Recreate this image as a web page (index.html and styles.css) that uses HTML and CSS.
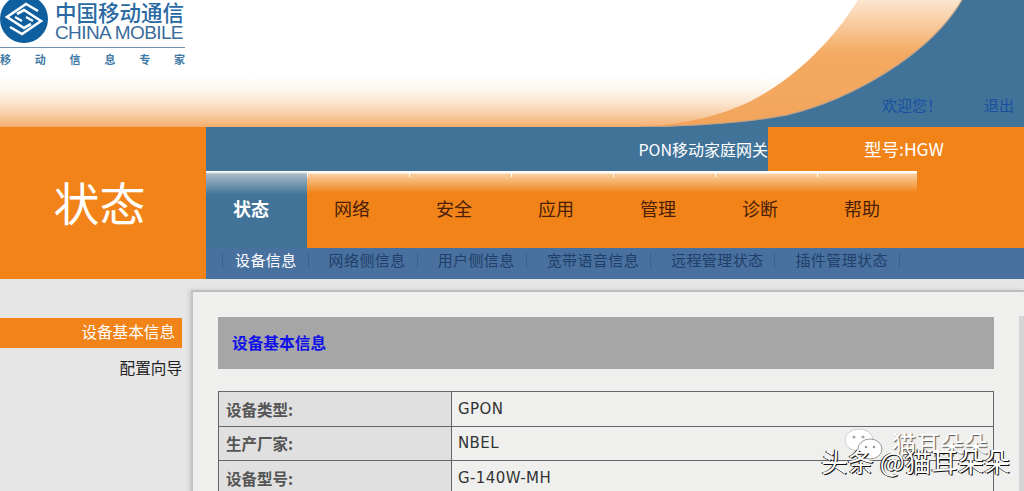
FILE: index.html
```html
<!DOCTYPE html>
<html lang="zh">
<head>
<meta charset="utf-8">
<title>状态</title>
<link rel="stylesheet" href="styles.css">
</head>
<body>
<div class="page">
  <header class="top">
    <svg class="swoosh" viewBox="0 0 1024 127" width="1024" height="127" preserveAspectRatio="none">
      <defs>
        <linearGradient id="fade" x1="0" y1="0" x2="0" y2="1">
          <stop offset="0" stop-color="#fce6cf"/>
          <stop offset="0.42" stop-color="#f4aa62"/>
          <stop offset="1" stop-color="#f2a45c"/>
        </linearGradient>
        <linearGradient id="base" x1="0" y1="0" x2="0" y2="1">
          <stop offset="0" stop-color="#ffffff" stop-opacity="0"/>
          <stop offset="0.55" stop-color="#ffffff" stop-opacity="0"/>
          <stop offset="1" stop-color="#f5ad6c"/>
        </linearGradient>
      </defs>
      <rect x="0" y="0" width="1024" height="127" fill="url(#base)"/>
      <path d="M962 0C930 55 850 100 787 115C750 122 700 126 640 127H1024V0Z" fill="#417399"/>
      <path d="M858 0C830 45 790 82 747 103C720 115 690 124 640 127C700 126 750 122 787 115C850 100 930 55 962 0Z" fill="url(#fade)"/>
      <path d="M962 0C930 55 850 100 787 115C750 122 700 126 640 127" fill="none" stroke="#b9a08a" stroke-width="1.2"/>
    </svg>
    <div class="logo">
      <svg class="logo-mark" viewBox="0 0 50 44" width="50" height="44">
        <circle cx="24" cy="19" r="24" fill="#0f5f9e"/>
        <path d="M38 11L26 4L7 17L24 28L31 24M10 27L22 34L41 21L24 10L17 14" fill="none" stroke="#fff" stroke-width="2.6"/>
        <path d="M15 17L22 21M26 17L33 21" fill="none" stroke="#fff" stroke-width="2.2"/>
      </svg>
      <div class="logo-text">
        <div class="logo-cn">中国移动通信</div>
        <div class="logo-en">CHINA MOBILE</div>
      </div>
      <div class="logo-slogan"><span>移</span><span>动</span><span>信</span><span>息</span><span>专</span><span>家</span></div>
    </div>
    <div class="top-links"><span class="welcome">欢迎您！</span><span>退出</span></div>
  </header>

  <section class="nav">
    <div class="nav-title">状态</div>
    <div class="nav-main">
      <div class="nav-info">
        <div class="product">PON移动家庭网关</div>
        <div class="model">型号:HGW</div>
      </div>
      <div class="tabs">
        <div class="tab tab-on">状态</div>
        <div class="tab">网络</div>
        <div class="tab">安全</div>
        <div class="tab">应用</div>
        <div class="tab">管理</div>
        <div class="tab">诊断</div>
        <div class="tab">帮助</div>
      </div>
      <div class="subtabs">
        <span class="sub sub-on">设备信息</span>
        <span class="sub">网络侧信息</span>
        <span class="sub">用户侧信息</span>
        <span class="sub">宽带语音信息</span>
        <span class="sub">远程管理状态</span>
        <span class="sub">插件管理状态</span>
      </div>
    </div>
  </section>

  <section class="body">
    <aside class="side">
      <div class="side-item side-on">设备基本信息</div>
      <div class="side-item">配置向导</div>
    </aside>
    <main class="panel">
      <h1 class="panel-title">设备基本信息</h1>
      <table class="info">
        <tr><th>设备类型:</th><td>GPON</td></tr>
        <tr><th>生产厂家:</th><td>NBEL</td></tr>
        <tr><th>设备型号:</th><td>G-140W-MH</td></tr>
      </table>
    </main>
  </section>

  <div class="mark">
    <svg class="mark-icon" viewBox="0 0 40 34" width="40" height="34">
      <ellipse cx="15" cy="12" rx="14" ry="11" fill="#fff" stroke="#ccc"/>
      <ellipse cx="26" cy="21" rx="12" ry="10" fill="#fff" stroke="#999"/>
      <circle cx="10" cy="9" r="1.6" fill="#aaa"/>
      <circle cx="19" cy="9" r="1.6" fill="#aaa"/>
      <circle cx="22" cy="19" r="1.3" fill="#999"/>
      <circle cx="30" cy="19" r="1.3" fill="#999"/>
    </svg>
    <span class="mark-a">猫耳朵朵</span>
    <span class="mark-b">头条 @猫耳朵朵</span>
  </div>
</div>
</body>
</html>
```
FILE: styles.css
```css
* { box-sizing: border-box; }
html, body { margin: 0; padding: 0; }
body { background: #e6e6e6; font-family: "Liberation Serif", "Noto Sans CJK SC", serif; overflow: hidden; }
.page { width: 1024px; height: 491px; position: relative; overflow: hidden; }

.top { height: 127px; position: relative; background: #fff; }
.swoosh { position: absolute; left: 0; top: 0; display: block; }
.logo { position: absolute; left: 0; top: 0; width: 185px; height: 70px; }
.logo-mark { position: absolute; left: 0; top: 0; }
.logo-text { position: absolute; left: 55px; top: 0; color: #2a6aa3; font-family: "Noto Sans CJK SC", sans-serif; }
.logo-cn { font-size: 21.5px; line-height: 24px; font-weight: 500; white-space: nowrap; }
.logo-en { font-size: 19px; line-height: 18px; letter-spacing: -0.6px; font-family: "Liberation Sans", sans-serif; white-space: nowrap; color: #3a6c9c; }
.logo-slogan { position: absolute; left: 0; top: 47px; width: 185px; border-top: 1px solid #6c93b5; padding-top: 3px; display: flex; justify-content: space-between; font-size: 11px; line-height: 16px; font-weight: 700; color: #3f7aa6; font-family: "Noto Sans CJK SC", sans-serif; }
.top-links { position: absolute; top: 96px; left: 882px; display: flex; font-size: 15px; line-height: 20px; color: #1a4fa0; }
.welcome { width: 102px; }

.nav { display: flex; height: 152px; }
.nav-title { width: 206px; background: #f18319; color: #fff; font-size: 46px; line-height: 152px; text-align: center; padding-right: 7px; padding-top: 3px; }
.nav-main { flex: 1; display: flex; flex-direction: column; background: #f18319; }
.nav-info { height: 44px; display: flex; font-family: "Noto Sans CJK SC", sans-serif; color: #fff; font-size: 16px; line-height: 44px; }
.product { width: 562px; background: #417399; text-align: right; white-space: nowrap; }
.model { flex: 1; text-align: center; padding-left: 16px; font-size: 17.5px; }
.tabs { height: 77px; display: flex; }
.tab { width: 102px; padding: 4px 0 0 27px; line-height: 70px; font-size: 18px; color: #4a1f05; background: linear-gradient(#fff, #fff) left top / 1px 6px no-repeat, linear-gradient(#fff 0, #fff 2px, #f9cfa0 3px, #f18319 22px); }
.tab:last-child { width: 100px; }
.tab-on { color: #fff; width: 101px; font-weight: 700; background: linear-gradient(#fff 0, #fff 1px, #a9bac6 3px, #417399 24px); }
.subtabs { height: 31px; background: #49719f; display: flex; align-items: center; padding: 0 0 5px 16px; font-size: 15px; color: #1f3f68; }
.sub { padding: 0 11px 0 20px; border-right: 1px solid #3c6288; line-height: 16px; white-space: nowrap; letter-spacing: 0.4px; }
.sub:first-child { border-left: 1px solid #3c6288; padding-left: 12px; }
.sub-on { color: #fff; }

.body { display: flex; height: 212px; background: #e6e6e6; }
.side { width: 182px; padding-top: 39px; flex: none; }
.side-item { height: 30px; line-height: 30px; text-align: right; font-size: 15.6px; color: #222; margin-bottom: 6px; white-space: nowrap; }
.side-on { background: #f18319; color: #fff; padding-right: 7px; }
.panel { margin: 11px 0 0 9px; flex: 1; height: 220px; background: #eff0ee; border-top: 2px solid #bdbdbd; border-left: 2px solid #c4c4c4; box-shadow: -2px 0 4px #ccc; padding: 25px 0 0 25px; position: relative; }
.panel::after { content: ""; position: absolute; right: 0; top: 24px; bottom: 0; width: 5px; background: #d4d4d4; }
.panel-title { margin: 0 0 22px; width: 776px; height: 52px; background: #a6a6a6; color: #1010e8; font-family: "Noto Sans CJK SC", sans-serif; font-size: 15.7px; line-height: 52px; font-weight: 700; padding-left: 14px; }
.info { border-collapse: collapse; width: 776px; font-family: "DejaVu Sans", "Noto Sans CJK SC", sans-serif; font-size: 15px; }
.info th, .info td { border: 1px solid #666; height: 34.5px; padding: 0 0 0 7px; text-align: left; }
.info th { width: 233px; background: #e0e0e0; color: #555; font-weight: 700; font-size: 15.5px; font-family: "Noto Sans CJK SC", sans-serif; }
.info td { color: #333; padding-left: 6px; letter-spacing: 0.4px; }

.mark { position: absolute; left: 0; top: 0; width: 1024px; height: 491px; pointer-events: none; font-family: "Noto Sans CJK SC", sans-serif; }
.mark-icon { position: absolute; left: 844px; top: 428px; }
.mark-a { position: absolute; left: 892px; top: 428px; font-size: 24px; line-height: 30px; color: #fff; text-shadow: 1px 1px 1px #555; white-space: nowrap; }
.mark-b { position: absolute; left: 821px; top: 445px; font-size: 26.4px; line-height: 32px; color: #fff; text-shadow: 1px 1px 0 #111, -1px 0 0 #111; white-space: nowrap; }
```
